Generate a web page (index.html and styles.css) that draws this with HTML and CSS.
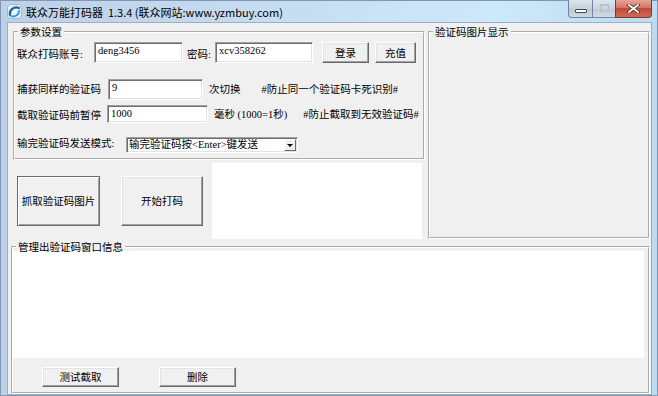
FILE: index.html
```html
<!DOCTYPE html>
<html lang="zh-CN">
<head>
  <meta charset="UTF-8" />
  <title>联众万能打码器</title>
  <link rel="stylesheet" href="styles.css">
</head>
<body>
  <div class="window">
    <div class="titlebar">
      <svg class="app-icon" viewBox="0 0 15 15" width="15" height="15">
        <rect x="0.5" y="0.5" width="14" height="14" rx="3" fill="#e2effa" stroke="#9db8d3"/>
        <path d="M3 11 C2 6, 7 2, 12 4" stroke="#1f5fae" stroke-width="2.2" fill="none" stroke-linecap="round"/>
        <path d="M4 12 C8 13.5, 12 11, 12 7" stroke="#3a95dc" stroke-width="1.8" fill="none" stroke-linecap="round"/>
        <circle cx="7.5" cy="8" r="1.8" fill="#ffffff"/>
      </svg>
      <span class="title">联众万能打码器&nbsp; 1.3.4 (联众网站:www.yzmbuy.com)</span>
      <div class="caption-btns">
        <span class="cap cap-min"><i></i></span>
        <span class="cap cap-max"><i></i></span>
        <span class="cap cap-close">
          <svg viewBox="0 0 13 9" width="13" height="9">
            <path d="M2 1 L11 8 M11 1 L2 8" stroke="#3b2420" stroke-width="3.4" stroke-linecap="square"/>
            <path d="M2 1 L11 8 M11 1 L2 8" stroke="#ffffff" stroke-width="1.8" stroke-linecap="square"/>
          </svg>
        </span>
      </div>
    </div>

    <div class="client">
      <div class="top">
        <div class="left-col">
          <fieldset class="group params">
            <legend>参数设置</legend>
            <div class="row row1">
              <span class="lbl w-acc">联众打码账号:</span>
              <div class="edit e-acc">deng3456</div>
              <span class="lbl w-pwd">密码:</span>
              <div class="edit e-pwd">xcv358262</div>
              <button class="btn b-login">登录</button>
              <button class="btn b-pay">充值</button>
            </div>
            <div class="row row2">
              <span class="lbl w-same">捕获同样的验证码</span>
              <div class="edit e-same">9</div>
              <span class="lbl unit">次切换</span>
              <span class="lbl note n-same">#防止同一个验证码卡死识别#</span>
            </div>
            <div class="row row3">
              <span class="lbl w-pause">截取验证码前暂停</span>
              <div class="edit e-pause">1000</div>
              <span class="lbl unit">毫秒 (1000=1秒)</span>
              <span class="lbl note n-pause">#防止截取到无效验证码#</span>
            </div>
            <div class="row row4">
              <span class="lbl w-mode">输完验证码发送模式:</span>
              <div class="combo">
                <span class="combo-text">输完验证码按&lt;Enter&gt;键发送</span>
                <span class="drop"><i></i></span>
              </div>
            </div>
          </fieldset>

          <div class="actions">
            <button class="btn btn-big default">抓取验证码图片</button>
            <button class="btn btn-big">开始打码</button>
            <div class="preview"></div>
          </div>
        </div>

        <fieldset class="group picture">
          <legend>验证码图片显示</legend>
        </fieldset>
      </div>

      <fieldset class="group log">
        <legend>管理出验证码窗口信息</legend>
        <div class="log-box"></div>
        <div class="log-btns">
          <button class="btn b-log">测试截取</button>
          <button class="btn b-log">删除</button>
        </div>
      </fieldset>
    </div>
  </div>
</body>
</html>
```

FILE: styles.css
```css
body {
  margin: 0;
  background: #ffffff;
  font-family: "Liberation Serif", "Noto Sans CJK SC", serif;
  font-size: 10.5px;
  color: #000;
}

.window {
  width: 658px;
  height: 396px;
  display: flex;
  flex-direction: column;
  background: linear-gradient(to right, #bdd0e6 0%, #c6dcf1 40%, #cde8f8 75%, #bcdbf1 100%);
  box-shadow: inset 0 0 0 1px #7f97b5;
}

.titlebar {
  height: 23px;
  display: flex;
  align-items: flex-start;
  flex-shrink: 0;
}

.app-icon {
  margin: 4px 0 0 7px;
}

.title {
  margin: 5px 0 0 4px;
  font-family: "Noto Sans CJK SC", sans-serif;
  font-size: 11px;
  line-height: 14px;
  color: #000;
}

.caption-btns {
  margin-left: auto;
  margin-right: 6px;
  display: flex;
  height: 18px;
}

.cap {
  box-sizing: border-box;
  height: 18px;
  display: flex;
  align-items: center;
  justify-content: center;
  border: 1px solid #7286a3;
  border-top: none;
}

.cap-min {
  width: 24px;
  border-right: none;
  border-radius: 0 0 0 4px;
  background: linear-gradient(#dde5ee, #c9d2dc 50%, #bcc7d3 51%, #cfd9e4);
}

.cap-min i {
  display: block;
  width: 10px;
  height: 2px;
  margin-top: 5px;
  background: #fff;
  border: 1px solid #3d4d63;
  border-radius: 1px;
}

.cap-max {
  width: 23px;
  border-right: none;
  background: linear-gradient(#dde5ee, #cbd4de 50%, #bfc9d5 51%, #d1dae5);
}

.cap-max i {
  display: block;
  width: 7px;
  height: 5px;
  margin-top: -2px;
  border: 1px solid #b5c0cd;
  border-top-width: 2px;
}

.cap-close {
  width: 37px;
  border-color: #7a3a33;
  border-radius: 0 0 4px 0;
  background: linear-gradient(#e7a597, #d47465 45%, #c24a3b 50%, #cf6a58);
}

.client {
  flex: 1;
  margin: 0 7px 2px 8px;
  padding: 3px 1px 0 3px;
  background: #f0f0f0;
  display: flex;
  flex-direction: column;
  box-shadow: 0 0 0 1px #9aaec6;
}

.top {
  display: flex;
  gap: 3px;
  height: 213px;
}

.left-col {
  width: 412px;
  margin-left: 2px;
  display: flex;
  flex-direction: column;
}

.group {
  margin: 0;
  padding: 0 2px;
  border: 2px groove #ffffff;
  min-width: 0;
}

.group legend {
  margin-left: 1px;
  padding: 0 2px;
  line-height: 12px;
  font-family: "Noto Sans CJK SC", sans-serif;
}

.params {
  box-sizing: border-box;
  height: 134px;
  padding-bottom: 5px;
}

.picture {
  box-sizing: border-box;
  width: 222px;
  height: 213px;
}

.row {
  display: flex;
  align-items: center;
}

.lbl {
  white-space: nowrap;
  line-height: 13px;
  flex-shrink: 0;
}

.row1 { margin-top: 4px; height: 21px; }
.row2 { margin-top: 16px; height: 21px; }
.row3 { margin-top: 5px; height: 18px; }
.row4 { margin-top: 14px; height: 16px; }

.w-acc { width: 77px; padding-top: 4px; }
.w-pwd { width: 28px; margin-left: 4px; padding-top: 4px; }
.w-same { width: 91px; }
.w-pause { width: 90px; padding-top: 3px; }
.w-mode { width: 109px; margin-top: -3px; }
.unit { margin-left: 6px; }
.n-same { margin-left: 21px; }
.n-pause { margin-left: 16px; }

.edit {
  box-sizing: border-box;
  align-self: stretch;
  padding: 2px 2px 0 3px;
  background: #fff;
  border: 1px solid;
  border-color: #a0a0a0 #ffffff #ffffff #a0a0a0;
  box-shadow: inset 1px 1px 0 #6e6e6e, inset -1px -1px 0 #e3e3e3;
  font-family: "Liberation Serif", serif;
  font-size: 10.5px;
  line-height: 11px;
  flex-shrink: 0;
}

.e-acc { width: 89px; }
.e-pwd { width: 98px; }
.e-same { width: 95px; }
.e-pause { width: 101px; }

.btn {
  box-sizing: border-box;
  padding: 0;
  background: #f0f0f0;
  border: 1px solid;
  border-color: #ffffff #6a6a6a #6a6a6a #ffffff;
  box-shadow: inset -1px -1px 0 #a0a0a0, inset 1px 1px 0 #e3e3e3;
  font-family: "Noto Sans CJK SC", sans-serif;
  font-size: 10.5px;
  line-height: 12px;
  color: #000;
  flex-shrink: 0;
}

.b-login { width: 47px; height: 21px; margin-left: 9px; }
.b-pay { width: 41px; height: 21px; margin-left: 6px; }

.combo {
  box-sizing: border-box;
  width: 172px;
  height: 16px;
  display: flex;
  align-items: center;
  background: #fff;
  border: 1px solid;
  border-color: #a0a0a0 #ffffff #ffffff #a0a0a0;
  box-shadow: inset 1px 1px 0 #6e6e6e, inset -1px -1px 0 #e3e3e3;
}

.combo-text {
  padding-left: 2px;
  line-height: 12px;
  white-space: nowrap;
}

.drop {
  box-sizing: border-box;
  width: 12px;
  height: 12px;
  margin: 0 1px 0 auto;
  display: flex;
  align-items: center;
  justify-content: center;
  background: #f0f0f0;
  border: 1px solid;
  border-color: #ffffff #6a6a6a #6a6a6a #ffffff;
}

.drop i {
  width: 0;
  height: 0;
  border-left: 3px solid transparent;
  border-right: 3px solid transparent;
  border-top: 3px solid #000;
}

.actions {
  margin-top: 3px;
  height: 76px;
  display: flex;
  align-items: center;
  padding-left: 4px;
}

.btn-big {
  width: 83px;
  height: 50px;
  margin-top: -1px;
}

.btn-big + .btn-big {
  width: 82px;
  margin-left: 21px;
}

.default {
  border-color: #6a6a6a;
  box-shadow: inset 1px 1px 0 #ffffff, inset -1px -1px 0 #a0a0a0;
}

.preview {
  width: 210px;
  align-self: stretch;
  margin-left: 9px;
  background: #fff;
}

.log {
  box-sizing: border-box;
  flex: 1;
  margin-top: 2px;
  padding: 0 4px 5px 0;
}

.log legend {
  margin-left: 3px;
}

.log-box {
  height: 107px;
  margin-top: -2px;
  background: #fff;
}

.log-btns {
  display: flex;
  gap: 40px;
  margin-top: 9px;
  padding-left: 29px;
}

.b-log {
  width: 77px;
  height: 20px;
}
```
